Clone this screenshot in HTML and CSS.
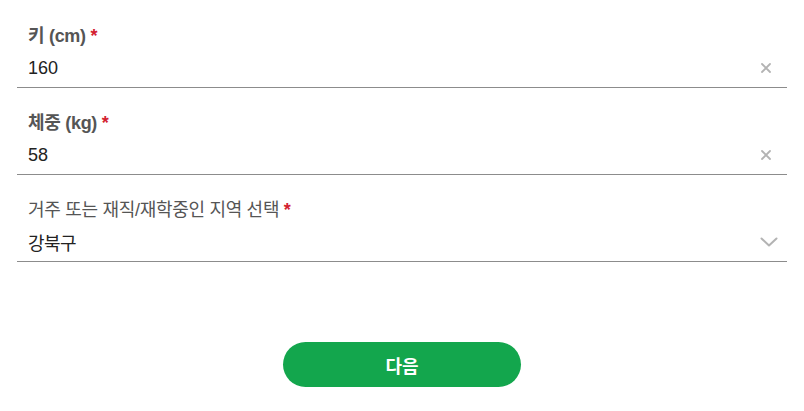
FILE: index.html
```html
<!DOCTYPE html>
<html lang="ko">
<head>
  <meta charset="UTF-8" />
  <meta name="viewport" content="width=device-width, initial-scale=1.0"/>
  <title>정보 입력</title>
  <link rel="stylesheet" href="styles.css">
</head>
<body>
  <form class="form">
    <div class="field">
      <label class="field-label bold" for="height">키 (cm) <span class="req">*</span></label>
      <div class="field-row">
        <input id="height" class="field-input" type="text" value="160" />
        <span class="clear">
          <svg width="12" height="12" viewBox="0 0 12 12"><path d="M2 2L10 10M10 2L2 10" stroke="#b3b3b3" stroke-width="1.8" stroke-linecap="round"/></svg>
        </span>
      </div>
    </div>

    <div class="field">
      <label class="field-label bold" for="weight">체중 (kg) <span class="req">*</span></label>
      <div class="field-row">
        <input id="weight" class="field-input" type="text" value="58" />
        <span class="clear">
          <svg width="12" height="12" viewBox="0 0 12 12"><path d="M2 2L10 10M10 2L2 10" stroke="#b3b3b3" stroke-width="1.8" stroke-linecap="round"/></svg>
        </span>
      </div>
    </div>

    <div class="field">
      <label class="field-label" for="region">거주 또는 재직/재학중인 지역 선택 <span class="req">*</span></label>
      <div class="field-row">
        <span id="region" class="field-input select-value">강북구</span>
        <span class="chevron">
          <svg width="18" height="10" viewBox="0 0 18 10"><path d="M1.5 1.5L9 8.5L16.5 1.5" fill="none" stroke="#b3b3b3" stroke-width="2" stroke-linecap="round" stroke-linejoin="round"/></svg>
        </span>
      </div>
    </div>

    <div class="actions">
      <button type="button" class="next-btn">다음</button>
    </div>
  </form>
</body>
</html>
```

FILE: styles.css
```css
html, body {
  margin: 0;
  padding: 0;
  background: #fff;
  font-family: "Liberation Sans", "Noto Sans CJK KR", sans-serif;
}

.form {
  padding: 1px 17px 0;
}

.field {
  display: flex;
  flex-direction: column;
  padding: 25px 0 4px 11px;
  border-bottom: 1px solid #8c8c8c;
}

.field-label {
  font-size: 18px;
  line-height: 20px;
  letter-spacing: -0.3px;
  color: #555;
}

.field-label.bold {
  font-weight: bold;
}

.req {
  color: #d3202f;
  font-weight: bold;
}

.field-row {
  display: flex;
  align-items: center;
  height: 30px;
  margin-top: 7px;
}

.field-input {
  flex: 1;
  border: none;
  outline: none;
  padding: 0;
  font-family: inherit;
  font-size: 18px;
  color: #222;
  background: transparent;
}

.select-value {
  letter-spacing: -0.5px;
}

.clear, .chevron {
  display: flex;
  align-items: center;
  justify-content: center;
  width: 24px;
  margin-right: 9px;
}

.chevron {
  margin-right: 6px;
}

.actions {
  display: flex;
  justify-content: center;
  padding-top: 80px;
}

.next-btn {
  width: 238px;
  height: 45px;
  border: none;
  border-radius: 23px;
  background: #13a64d;
  color: #fff;
  font-family: inherit;
  font-size: 18px;
  font-weight: bold;
  cursor: pointer;
}
```
